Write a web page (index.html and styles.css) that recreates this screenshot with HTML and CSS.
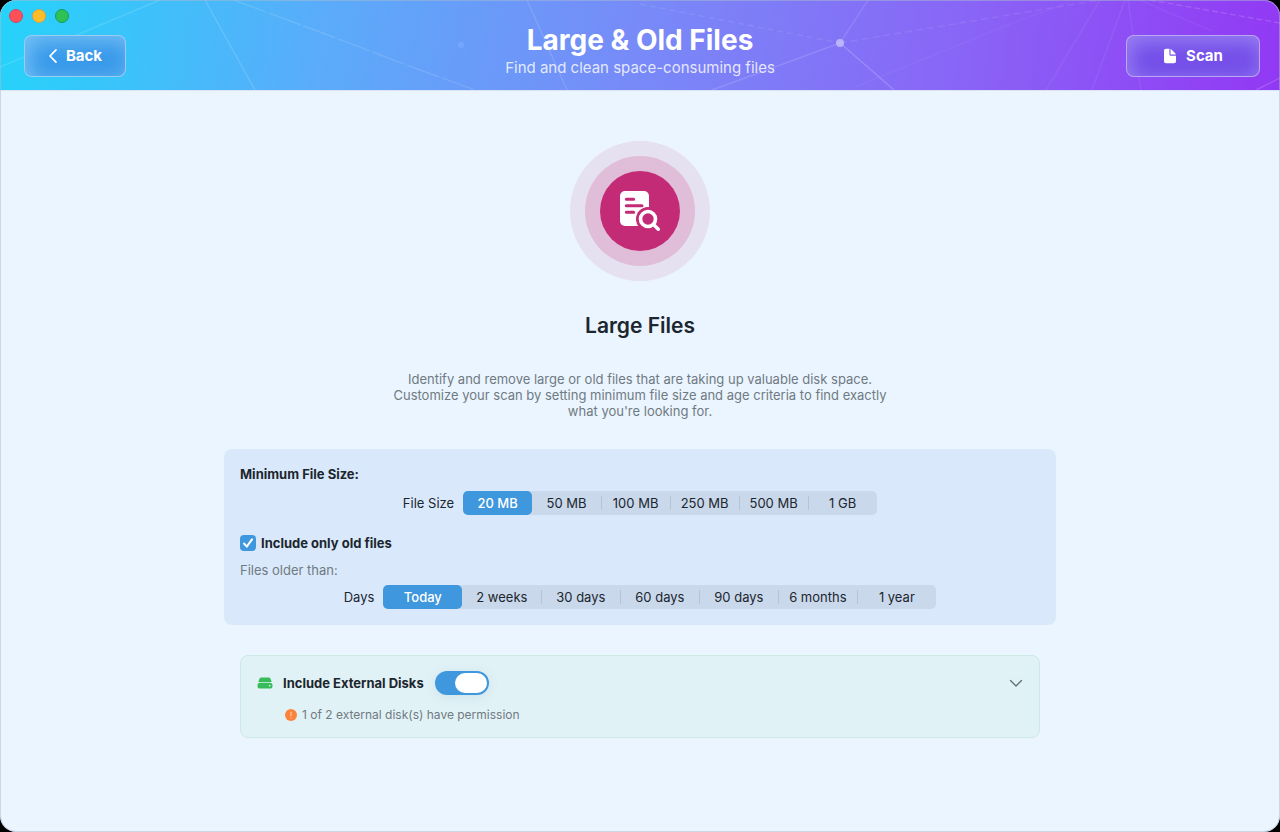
FILE: index.html
```html
<!DOCTYPE html>
<html lang="en">
<head>
<meta charset="utf-8">
<meta name="viewport" content="width=device-width, initial-scale=1">
<title>Large &amp; Old Files</title>
<link rel="stylesheet" href="styles.css">
</head>
<body>
<div class="window">
  <header class="header">
    <svg class="network" viewBox="0 0 1280 90" preserveAspectRatio="none" aria-hidden="true">
      <g fill="none" stroke="#fff" stroke-width="1.4">
        <path d="M0 67L160 0" opacity=".13"/>
        <path d="M205 0L255 90" opacity=".15"/>
        <path d="M234 0L320 32L420 70L475 90" opacity=".12" stroke-dasharray="34 3"/>
        <path d="M527 0L567 90" opacity=".13"/>
        <path d="M640 4L840 43" opacity=".09" stroke-dasharray="6 4"/>
        <path d="M840 43L868 0" opacity=".11"/>
        <path d="M840 43L894 90" opacity=".18"/>
        <path d="M840 43L712 90" opacity=".14"/>
        <path d="M840 43L960 23L1100 0" opacity=".09" stroke-dasharray="7 4"/>
        <path d="M855 87L1010 24L1070 2" opacity=".04"/>
        <path d="M1125 0L1092 90M1100 0L1046 90" opacity=".07"/>
        <path d="M1128 0L1141 90" opacity=".07"/>
        <path d="M1150 0L1280 23" opacity=".15" stroke-dasharray="6 3"/>
        <path d="M1140 0L1212 31" opacity=".05"/>
        <path d="M1256 90L1280 78" opacity=".16"/>
      </g>
      <circle cx="840" cy="43" r="4" fill="#c4bcff" opacity=".85"/>
      <circle cx="461" cy="45" r="3" fill="#8bb6ff" opacity=".4"/>
    </svg>
    <div class="side">
      <div class="lights" aria-hidden="true"><span class="light close"></span><span class="light minimise"></span><span class="light expand"></span></div>
      <button class="glass back" type="button">
        <svg width="10" height="16" viewBox="0 0 10 16" aria-hidden="true"><path d="M8 1.8L2 8l6 6.2" fill="none" stroke="#fff" stroke-width="1.7" stroke-linecap="round" stroke-linejoin="round"/></svg>
        Back
      </button>
    </div>
    <div class="heading">
      <h1>Large &amp; Old Files</h1>
      <p>Find and clean space-consuming files</p>
    </div>
    <div class="side end">
      <button class="glass scan" type="button">
        <svg width="14" height="16" viewBox="0 0 14 16" aria-hidden="true"><path d="M3 .7H6.4V6.2Q6.4 7.7 7.9 7.7H13V13.2Q13 15.3 11 15.3H3Q1 15.3 1 13.2V2.8Q1 .7 3 .7ZM7.5 .9Q8 1 8.5 1.5L12.2 5.3Q12.8 5.9 12.9 6.6H8.2Q7.5 6.6 7.5 5.9Z" fill="#fff"/></svg>
        Scan
      </button>
    </div>
  </header>

  <main class="content">
    <div class="badge">
      <div class="ring">
        <div class="disc">
          <svg width="42" height="42" viewBox="0 0 42 42" aria-hidden="true">
            <rect x="1" y="1" width="29" height="35" rx="5" fill="#fff"/>
            <path d="M7.3 9.3H14.7M7.3 15.8H23M7.3 22.3H14.7" stroke="#c42b77" stroke-width="3" stroke-linecap="round"/>
            <circle cx="29" cy="29" r="12" fill="#c42b77"/>
            <circle cx="29" cy="29" r="7.5" fill="none" stroke="#fff" stroke-width="3.6"/>
            <path d="M35 35L39.3 39.3" stroke="#fff" stroke-width="3.4" stroke-linecap="round"/>
          </svg>
        </div>
      </div>
    </div>
    <h2>Large Files</h2>
    <p class="intro">Identify and remove large or old files that are taking up valuable disk space. Customize your scan by setting minimum file size and age criteria to find exactly what you're looking for.</p>

    <section class="options">
      <h3>Minimum File Size:</h3>
      <div class="picker size">
        <span id="size-label">File Size</span>
        <div class="segments" role="radiogroup" aria-labelledby="size-label">
          <label><input type="radio" name="size" checked><span>20 MB</span></label>
          <label><input type="radio" name="size"><span>50 MB</span></label>
          <label><input type="radio" name="size"><span>100 MB</span></label>
          <label><input type="radio" name="size"><span>250 MB</span></label>
          <label><input type="radio" name="size"><span>500 MB</span></label>
          <label><input type="radio" name="size"><span>1 GB</span></label>
        </div>
      </div>
      <label class="check">
        <input type="checkbox" checked>
        <svg width="16" height="16" viewBox="0 0 16 16" aria-hidden="true"><rect width="16" height="16" rx="4" fill="#3f97dd"/><path d="M4 8.5L6.8 11.7L12 4.4" fill="none" stroke="#fff" stroke-width="2" stroke-linecap="round" stroke-linejoin="round"/></svg>
        <span>Include only old files</span>
      </label>
      <p class="older">Files older than:</p>
      <div class="picker days">
        <span id="days-label">Days</span>
        <div class="segments" role="radiogroup" aria-labelledby="days-label">
          <label><input type="radio" name="days" checked><span>Today</span></label>
          <label><input type="radio" name="days"><span>2 weeks</span></label>
          <label><input type="radio" name="days"><span>30 days</span></label>
          <label><input type="radio" name="days"><span>60 days</span></label>
          <label><input type="radio" name="days"><span>90 days</span></label>
          <label><input type="radio" name="days"><span>6 months</span></label>
          <label><input type="radio" name="days"><span>1 year</span></label>
        </div>
      </div>
    </section>

    <section class="disks">
      <div class="disk-row">
        <svg class="drive" width="16" height="12" viewBox="0 0 16 12" aria-hidden="true"><path d="M4.2 .6H11.8Q13 .6 13.4 1.6L14.7 5.1Q13.9 4.9 13 4.9H3Q2.1 4.9 1.3 5.1L2.6 1.6Q3 .6 4.2 .6Z" fill="#36bd59"/><rect x=".5" y="5.8" width="15" height="5.7" rx="2.6" fill="#36bd59"/><circle cx="12.7" cy="8.6" r=".9" fill="#e1f2f5"/></svg>
        <label for="external">Include External Disks</label>
        <input class="switch" id="external" type="checkbox" role="switch" checked>
        <button class="expander" type="button" aria-label="Show disks">
          <svg width="14" height="10" viewBox="0 0 14 10" aria-hidden="true"><path d="M1.5 2.5L7 8L12.5 2.5" fill="none" stroke="#626d72" stroke-width="1.3" stroke-linecap="round" stroke-linejoin="round"/></svg>
        </button>
      </div>
      <p class="notice">
        <svg width="12" height="12" viewBox="0 0 12 12" aria-hidden="true"><circle cx="6" cy="6" r="6" fill="#fb833b"/><path d="M6 3V6.7M6 8.8V8.9" stroke="#ffc9a5" stroke-width="1.2" stroke-linecap="round"/></svg>
        1 of 2 external disk(s) have permission
      </p>
    </section>
  </main>
</div>
</body>
</html>
```
FILE: styles.css
```css
* { box-sizing: border-box; }

body {
  margin: 0;
  background: #000;
  color: #1c262e;
  font-family: Inter, "Liberation Sans", sans-serif;
  font-size: 13px;
  line-height: 16px;
}

h1, h2, h3, p { margin: 0; }

button, input { font: inherit; margin: 0; }

svg { display: block; flex: none; }

.window {
  position: relative;
  display: flex;
  flex-direction: column;
  min-height: 100vh;
  overflow: hidden;
  border-radius: 16px;
  background: #eaf5ff;
}

.window::after {
  content: "";
  position: absolute;
  inset: 0;
  border: 1px solid rgba(170, 185, 205, .5);
  border-radius: 16px;
  pointer-events: none;
}

.header {
  position: relative;
  display: grid;
  grid-template-columns: 1fr auto 1fr;
  min-height: 90px;
  background: linear-gradient(98deg, #25d3fa 0%, #5aacfa 25%, #788af8 50%, #8965f6 75%, #9238f4 100%);
  box-shadow: 0 1px 0 #d9e3f5;
  color: #fff;
}

.network {
  position: absolute;
  inset: 0;
  width: 100%;
  height: 100%;
}

.side {
  position: relative;
  display: flex;
  flex-direction: column;
  align-items: flex-start;
  gap: 12px;
  padding: 9px 0 13px 24px;
}

.side.end {
  align-items: flex-end;
  justify-content: flex-end;
  padding: 0 20px 13px 0;
}

.lights {
  display: flex;
  gap: 9px;
  margin-left: -15px;
}

.light {
  width: 14px;
  height: 14px;
  border: 1px solid;
  border-radius: 50%;
}

.close { background: #ff4f57; border-color: #c84b68; }
.minimise { background: #fdbd2b; border-color: #d2a244; }
.expand { background: #2fc154; border-color: #169c61; }

.glass {
  display: flex;
  align-items: center;
  justify-content: center;
  height: 42px;
  padding: 0;
  border: 1px solid rgba(255, 255, 255, .5);
  border-radius: 8px;
  color: #fff;
  font-size: 15px;
  font-weight: 700;
  line-height: 20px;
}

.back {
  gap: 8px;
  width: 102px;
  background: rgba(58, 148, 232, .9);
  box-shadow: inset 5px 5px 20px rgba(150, 215, 250, .65);
}

.scan {
  gap: 9px;
  width: 134px;
  background: rgba(113, 80, 231, .9);
  box-shadow: inset 3px 5px 20px rgba(180, 165, 250, .6);
}

.heading {
  position: relative;
  padding-top: 22px;
  text-align: center;
}

.heading h1 {
  font-size: 28px;
  font-weight: 700;
  line-height: 36px;
}

.heading p {
  color: rgba(255, 255, 255, .82);
  font-size: 15px;
  line-height: 19px;
}

.content {
  display: flex;
  flex: 1;
  flex-direction: column;
  align-items: center;
  padding: 51px 24px 24px;
}

.badge, .ring, .disc {
  display: flex;
  align-items: center;
  justify-content: center;
  border-radius: 50%;
}

.badge { width: 140px; height: 140px; background: #e6e1f0; }
.ring { width: 110px; height: 110px; background: #e0bdd8; }
.disc { width: 80px; height: 80px; background: #c42b77; }

.content h2 {
  margin-top: 31px;
  font-size: 21px;
  font-weight: 600;
  line-height: 28px;
}

.intro {
  max-width: 500px;
  margin-top: 31px;
  color: #707a82;
  text-align: center;
}

.options {
  width: 100%;
  max-width: 832px;
  margin-top: 30px;
  padding: 16px;
  border-radius: 8px;
  background: #d9e9fb;
}

.options h3 {
  font-size: 13px;
  font-weight: 700;
  line-height: 18px;
}

.picker {
  display: flex;
  align-items: center;
  justify-content: center;
  gap: 9px;
}

.size { margin-top: 8px; }
.days { margin-top: 7px; }

.segments {
  display: flex;
  border-radius: 5px;
  background: #c9d8ea;
}

.segments label {
  position: relative;
  width: 69px;
}

.days label { width: 79px; }

.segments input {
  position: absolute;
  inset: 0;
  width: 100%;
  height: 100%;
  opacity: 0;
}

.segments span {
  display: block;
  border-radius: 5px;
  line-height: 24px;
  text-align: center;
}

.segments input:checked + span {
  background: #3f97dd;
  color: #fff;
  font-weight: 500;
}

.segments label:nth-child(n + 3)::before {
  content: "";
  position: absolute;
  top: 5px;
  bottom: 5px;
  left: 0;
  width: 1px;
  background: #b5c5d8;
}

.check {
  position: relative;
  display: flex;
  align-items: center;
  gap: 5px;
  width: max-content;
  margin-top: 20px;
  font-weight: 700;
}

.check input {
  position: absolute;
  width: 16px;
  height: 16px;
  opacity: 0;
}

.older {
  margin-top: 11px;
  color: #707a82;
}

.disks {
  width: 100%;
  max-width: 800px;
  margin-top: 30px;
  padding: 15px 16px 14px;
  border: 1px solid #cde9e6;
  border-radius: 8px;
  background: #e1f2f6;
}

.disk-row {
  display: flex;
  align-items: center;
}

.disk-row label {
  margin: 0 11px 0 10px;
  font-weight: 700;
}

.switch {
  width: 54px;
  height: 24px;
  padding: 2px;
  appearance: none;
  border-radius: 12px;
  background: #3f97dd;
  box-shadow: 0 2px 12px rgba(80, 120, 160, .12);
}

.switch::before {
  content: "";
  display: block;
  width: 32px;
  height: 20px;
  border-radius: 10px;
  background: #fff;
}

.switch:checked::before { margin-left: 18px; }

.expander {
  margin-left: auto;
  padding: 0;
  border: 0;
  background: none;
}

.notice {
  display: flex;
  align-items: center;
  gap: 5px;
  margin: 12px 0 0 28px;
  color: #707a82;
  font-size: 12px;
}
```
